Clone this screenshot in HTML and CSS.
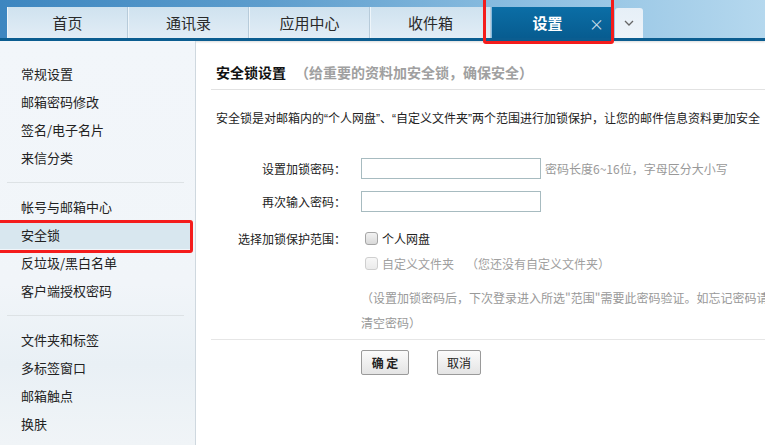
FILE: index.html
```html
<!DOCTYPE html>
<html lang="zh-CN">
<head>
<meta charset="utf-8">
<title>设置 - 安全锁</title>
<link rel="stylesheet" href="styles.css">
</head>
<body>
<div class="app">
  <header class="topbar">
    <nav class="tabs">
      <a class="tab">首页</a>
      <a class="tab">通讯录</a>
      <a class="tab">应用中心</a>
      <a class="tab">收件箱</a>
      <a class="tab tab-active">设置<span class="tab-close">×</span></a>
      <a class="tab-more"><svg width="10" height="6" viewBox="0 0 10 6"><path d="M1 1 L5 5 L9 1" fill="none" stroke="#666" stroke-width="1.3"/></svg></a>
    </nav>
  </header>
  <div class="main">
    <aside class="sidebar">
      <ul class="menu">
        <li>常规设置</li>
        <li>邮箱密码修改</li>
        <li>签名/电子名片</li>
        <li>来信分类</li>
      </ul>
      <div class="sep"></div>
      <ul class="menu">
        <li>帐号与邮箱中心</li>
        <li class="current">安全锁</li>
        <li>反垃圾/黑白名单</li>
        <li>客户端授权密码</li>
      </ul>
      <div class="sep"></div>
      <ul class="menu">
        <li>文件夹和标签</li>
        <li>多标签窗口</li>
        <li>邮箱触点</li>
        <li>换肤</li>
      </ul>
    </aside>
    <section class="content">
      <h2 class="title">安全锁设置<span class="subtitle">（给重要的资料加安全锁，确保安全）</span></h2>
      <p class="intro">安全锁是对邮箱内的<span class="q">“</span>个人网盘<span class="q">”</span>、<span class="q">“</span>自定义文件夹<span class="q">”</span>两个范围进行加锁保护，让您的邮件信息资料更加安全</p>
      <div class="form">
        <div class="row">
          <label class="lbl">设置加锁密码：</label>
          <span class="input"></span>
          <span class="hint">密码长度6~16位，字母区分大小写</span>
        </div>
        <div class="row row2">
          <label class="lbl">再次输入密码：</label>
          <span class="input"></span>
        </div>
        <div class="row row3">
          <label class="lbl">选择加锁保护范围：</label>
          <span class="check"></span><span class="opt">个人网盘</span>
        </div>
        <div class="row row4">
          <label class="lbl"></label>
          <span class="check disabled"></span><span class="opt muted">自定义文件夹</span><span class="opt muted note-inline">（您还没有自定义文件夹）</span>
        </div>
        <div class="note">（设置加锁密码后，下次登录进入所选"范围"需要此密码验证。如忘记密码请到安全中心<br>清空密码）</div>
      </div>
      <div class="actions">
        <button class="btn btn-ok">确 定</button>
        <button class="btn btn-cancel">取消</button>
      </div>
    </section>
  </div>
  <div class="mark mark-tab"></div>
  <div class="mark mark-menu"></div>
</div>
</body>
</html>
```

FILE: styles.css
```css
* { box-sizing: border-box; }
html, body { margin: 0; padding: 0; }
body {
  width: 765px;
  height: 445px;
  overflow: hidden;
  font-family: "Noto Sans CJK SC", "DejaVu Sans", sans-serif;
  font-size: 12px;
  color: #222;
  background: #fff;
}
.app { position: relative; width: 765px; height: 445px; display: flex; flex-direction: column; }

.topbar {
  height: 41px;
  flex: none;
  background: linear-gradient(to right, #3d86c0 0%, #5d9dcd 35%, #8ec0e2 70%, #b5d8ee 100%);
  border-bottom: 3px solid #0b5d90;
  padding-left: 7px;
  display: flex;
  align-items: flex-end;
  box-shadow: 0 1px 2px rgba(0,0,0,0.15);
}
.tabs { display: flex; align-items: flex-end; height: 31px; }
.tab {
  width: 121px;
  height: 31px;
  display: flex;
  align-items: center;
  justify-content: center;
  font-size: 15px;
  color: #2a2a2a;
  background: linear-gradient(to bottom, #cfe2ef, #e2edf6);
  border-right: 1px solid #b7cbda;
  border-left: 1px solid #eef5fa;
}
.tab-active {
  position: relative;
  background: linear-gradient(to bottom, #0b6ea6, #075c90);
  color: #fff;
  font-weight: bold;
  border: none;
  width: 121px;
  margin-left: 1px;
  padding-right: 10px;
}
.tab-close {
  position: absolute;
  right: 9px;
  top: 6px;
  font-size: 15px;
  font-weight: normal;
  color: #c9dcea;
}
.tab-more {
  width: 28px;
  height: 30px;
  margin-left: 2px;
  background: linear-gradient(to bottom, #e6eff7, #edf3f9);
  border-radius: 3px 3px 0 0;
  display: flex;
  align-items: center;
  justify-content: center;
}

.main { flex: 1; display: flex; min-height: 0; }
.sidebar {
  width: 196px;
  flex: none;
  background: linear-gradient(to bottom, #f2f6fa 0%, #f1f5f9 60%, #e9f0f5 80%, #f0f4f7 100%);
  border-right: 1px solid #cfd8df;
  padding-top: 19px;
}
.menu { list-style: none; margin: 0; padding: 0; }
.menu li {
  height: 28px;
  line-height: 28px;
  padding-left: 21px;
  font-size: 13px;
  color: #222;
  width: 192px;
}
.menu li.current { background: #d8e7ef; }
.sep { height: 1px; background: #dde2e5; margin: 10px 11px 10px 7px; }

.content { flex: 1; min-width: 0; overflow: hidden; padding-top: 21px; }
.title {
  margin: 0 0 0 15px;
  padding: 0 0 7px 5px;
  height: 28px;
  line-height: 20px;
  font-size: 14px;
  font-weight: bold;
  color: #111;
  border-bottom: 1px solid #e2e2e2;
  white-space: nowrap;
}
.subtitle { color: #a0a0a0; margin-left: 9px; font-size: 14px; }
.intro {
  margin: 18px 0 0 20px;
  line-height: 20px;
  white-space: nowrap;
  font-size: 12px;
  color: #222;
}
.q { font-family: "Liberation Sans", sans-serif; }
.form { margin-top: 29px; padding-left: 20px; }
.row { display: flex; align-items: center; height: 21px; white-space: nowrap; }
.row2 { margin-top: 12px; }
.row3 { margin-top: 16px; height: 20px; }
.row4 { margin-top: 5px; height: 20px; }
.lbl { width: 130px; text-align: right; margin-right: 15px; color: #222; flex: none; }
.input {
  width: 180px;
  height: 21px;
  border: 1px solid #a7bbc0;
  background: #fff;
  flex: none;
}
.hint { margin-left: 4px; color: #999; }
.check {
  width: 13px;
  height: 13px;
  border: 1px solid #a5a5a5;
  border-radius: 3px;
  background: linear-gradient(to bottom, #f2f2f2, #d9d9d9);
  margin-left: 4px;
  margin-right: 4px;
  flex: none;
}
.check.disabled { border-color: #cfcfcf; background: linear-gradient(to bottom, #f7f7f7, #ebebeb); }
.opt { color: #222; }
.muted { color: #a0a0a0; }
.note-inline { margin-left: 12px; }
.note {
  margin-left: 145px;
  margin-top: 12px;
  line-height: 25px;
  color: #999;
  white-space: nowrap;
}
.actions {
  margin-top: 4px;
  margin-left: 15px;
  border-top: 1px solid #e6e6e6;
  padding-top: 10px;
  padding-left: 150px;
  display: flex;
  gap: 28px;
}
.btn {
  height: 25px;
  font-family: inherit;
  font-size: 12px;
  color: #222;
  border: 1px solid #9a9a9a;
  border-radius: 2px;
  background: linear-gradient(to bottom, #fbfbfb, #e4e4e4);
  padding: 0;
}
.btn-ok { width: 48px; font-weight: bold; }
.btn-cancel { width: 44px; }

.mark { position: absolute; border: 3px solid #f41c1c; border-radius: 3px; pointer-events: none; }
.mark-tab { left: 483px; top: -3px; width: 131px; height: 47px; }
.mark-menu { left: -4px; top: 220px; width: 197px; height: 33px; }
```
